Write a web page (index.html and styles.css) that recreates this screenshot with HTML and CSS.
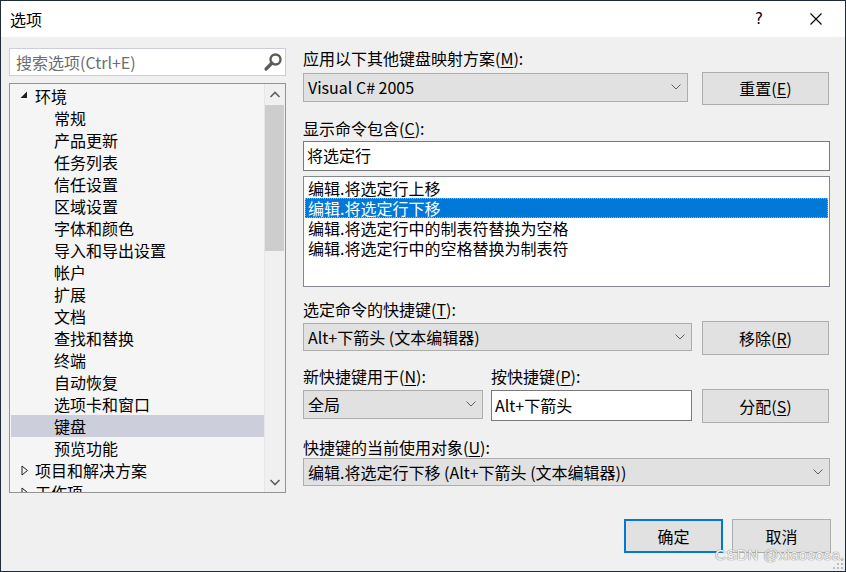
FILE: index.html
```html
<!DOCTYPE html>
<html lang="zh-CN">
<head>
<meta charset="utf-8">
<title>选项</title>
<link rel="stylesheet" href="styles.css">
</head>
<body>
<div class="window">
  <div class="titlebar">
    <span class="title">选项</span>
    <span class="help">?</span>
    <svg class="close" width="14" height="14" viewBox="0 0 14 14"><path d="M1.5 1.5 L12.5 12.5 M12.5 1.5 L1.5 12.5" stroke="#000" stroke-width="1.1" fill="none"/></svg>
  </div>
  <div class="client">
    <div class="main">
      <div class="left">
        <div class="search">
          <span class="placeholder">搜索选项(Ctrl+E)</span>
          <svg class="search-icon" width="20" height="20" viewBox="0 0 20 20"><circle cx="12.5" cy="7.5" r="5" stroke="#5c5c5c" stroke-width="2.4" fill="none"/><path d="M9 11 L3 17" stroke="#5c5c5c" stroke-width="3.2" stroke-linecap="round"/></svg>
        </div>
        <div class="tree">
          <div class="tree-list">
            <div class="node"><svg class="exp" width="8" height="8" viewBox="0 0 8 8"><polygon points="7,0.5 7,7 0.5,7" fill="#1e1e1e"/></svg>环境</div>
            <div class="node child">常规</div>
            <div class="node child">产品更新</div>
            <div class="node child">任务列表</div>
            <div class="node child">信任设置</div>
            <div class="node child">区域设置</div>
            <div class="node child">字体和颜色</div>
            <div class="node child">导入和导出设置</div>
            <div class="node child">帐户</div>
            <div class="node child">扩展</div>
            <div class="node child">文档</div>
            <div class="node child">查找和替换</div>
            <div class="node child">终端</div>
            <div class="node child">自动恢复</div>
            <div class="node child">选项卡和窗口</div>
            <div class="node child selected">键盘</div>
            <div class="node child">预览功能</div>
            <div class="node"><svg class="col" width="8" height="11" viewBox="0 0 8 11"><polygon points="1,1 6.5,5.5 1,10" fill="none" stroke="#1e1e1e" stroke-width="1"/></svg>项目和解决方案</div>
            <div class="node"><svg class="col" width="8" height="11" viewBox="0 0 8 11"><polygon points="1,1 6.5,5.5 1,10" fill="none" stroke="#1e1e1e" stroke-width="1"/></svg>工作项</div>
          </div>
          <div class="vscroll">
            <svg class="sarrow" width="20" height="20" viewBox="0 0 20 20"><path d="M5.5 12 L10 7.5 L14.5 12" stroke="#606060" stroke-width="1.6" fill="none"/></svg>
            <div class="thumb"></div>
            <div class="track"></div>
            <svg class="sarrow" width="20" height="20" viewBox="0 0 20 20"><path d="M5.5 8 L10 12.5 L14.5 8" stroke="#606060" stroke-width="1.6" fill="none"/></svg>
          </div>
        </div>
      </div>
      <div class="right">
        <div class="label l1">应用以下其他键盘映射方案(<u>M</u>):</div>
        <div class="row r1">
          <div class="combo c1"><span>Visual C# 2005</span><svg class="chev" width="10" height="6" viewBox="0 0 10 6"><path d="M0.5 0.5 L5 5 L9.5 0.5" stroke="#606060" stroke-width="1" fill="none"/></svg></div>
          <div class="button">重置(<u>E</u>)</div>
        </div>
        <div class="label l2">显示命令包含(<u>C</u>):</div>
        <div class="textbox t1">将选定行</div>
        <div class="listbox">
          <div class="item">编辑.将选定行上移</div>
          <div class="item sel">编辑.将选定行下移</div>
          <div class="item">编辑.将选定行中的制表符替换为空格</div>
          <div class="item">编辑.将选定行中的空格替换为制表符</div>
        </div>
        <div class="label l3">选定命令的快捷键(<u>T</u>):</div>
        <div class="row r3">
          <div class="combo c3"><span>Alt+下箭头 (文本编辑器)</span><svg class="chev" width="10" height="6" viewBox="0 0 10 6"><path d="M0.5 0.5 L5 5 L9.5 0.5" stroke="#606060" stroke-width="1" fill="none"/></svg></div>
          <div class="button">移除(<u>R</u>)</div>
        </div>
        <div class="row l4">
          <div class="label w4a">新快捷键用于(<u>N</u>):</div>
          <div class="label">按快捷键(<u>P</u>):</div>
        </div>
        <div class="row r4">
          <div class="combo c4"><span>全局</span><svg class="chev" width="10" height="6" viewBox="0 0 10 6"><path d="M0.5 0.5 L5 5 L9.5 0.5" stroke="#606060" stroke-width="1" fill="none"/></svg></div>
          <div class="textbox t4">Alt+下箭头</div>
          <div class="button">分配(<u>S</u>)</div>
        </div>
        <div class="label l5">快捷键的当前使用对象(<u>U</u>):</div>
        <div class="combo c5"><span>编辑.将选定行下移 (Alt+下箭头 (文本编辑器))</span><svg class="chev" width="10" height="6" viewBox="0 0 10 6"><path d="M0.5 0.5 L5 5 L9.5 0.5" stroke="#606060" stroke-width="1" fill="none"/></svg></div>
      </div>
    </div>
    <div class="footer">
      <div class="button ok">确定</div>
      <div class="button cancel">取消</div>
    </div>
  </div>
  <div class="watermark">CSDN @xiaososa.</div>
  <svg class="grip" width="12" height="12" viewBox="0 0 12 12"><g fill="#bdbdbd"><rect x="9" y="1" width="2" height="2"/><rect x="5" y="5" width="2" height="2"/><rect x="9" y="5" width="2" height="2"/><rect x="1" y="9" width="2" height="2"/><rect x="5" y="9" width="2" height="2"/><rect x="9" y="9" width="2" height="2"/></g></svg>
</div>
</body>
</html>
```
FILE: styles.css
```css
* { box-sizing: border-box; }
html, body { margin: 0; padding: 0; background: #1f2b38; }
body {
  font-family: "Noto Sans CJK SC", "Noto Sans", sans-serif;
  font-size: 16px;
  color: #000;
}
u { text-decoration: underline; text-underline-offset: 2px; text-decoration-thickness: 1px; }

.window {
  position: relative;
  width: 846px;
  height: 572px;
  border: 1px solid #1f2b38;
  background: #f0f0f0;
  overflow: hidden;
}

.titlebar {
  height: 36px;
  background: #fff;
  display: flex;
  align-items: center;
  padding-left: 9px;
}
.title { font-size: 16px; line-height: 20px; }
.help { margin-left: auto; line-height: 20px; margin-right: 46px; font-family: "DejaVu Sans", sans-serif; font-size: 15px; }
.close { margin-right: 22px; }

.client { height: 534px; display: flex; flex-direction: column; }
.main { display: flex; padding-left: 8px; }

.left { width: 277px; padding-top: 11px; }
.search {
  height: 28px;
  border: 1px solid #ccccde;
  background: #fff;
  display: flex;
  align-items: center;
  padding-left: 6px;
  padding-bottom: 1px;
}
.placeholder { color: #6d6d6d; line-height: 20px; }
.search-icon { margin-left: auto; margin-right: 2px; }

.tree {
  margin-top: 7px;
  height: 410px;
  border: 1px solid #939393;
  background: #f5f5f5;
  display: flex;
  overflow: hidden;
}
.tree-list { flex: 1; padding-top: 1px; padding-left: 1px; }
.node {
  height: 22px;
  line-height: 22px;
  padding-left: 24px;
  white-space: nowrap;
  display: flex;
  align-items: center;
}
.node.child { padding-left: 43px; }
.node.selected { background: #cccedb; }
.exp { margin-left: -15px; margin-right: 7px; margin-top: -2px; }
.col { margin-left: -14px; margin-right: 6px; }

.vscroll {
  width: 21px;
  border-left: 1px solid #e6e6e6;
  background: #f0f0f0;
  display: flex;
  flex-direction: column;
}
.sarrow { display: block; flex: none; margin-top: 1px; }
.thumb { height: 146px; background: #cdcdcd; margin-right: 1px; flex: none; }
.track { flex: 1; }

.right { margin-left: 17px; width: 527px; padding-top: 11px; }
.label { height: 20px; line-height: 20px; white-space: nowrap; }
.row { display: flex; align-items: center; }

.combo {
  background: #e1e1e1;
  border: 1px solid #adadad;
  display: flex;
  align-items: center;
  padding-left: 4px;
  padding-right: 6px;
  padding-bottom: 1px;
  line-height: 20px;
  white-space: nowrap;
}
.combo .chev { margin-left: auto; }
.button {
  width: 127px;
  background: #e1e1e1;
  border: 1px solid #adadad;
  display: flex;
  align-items: center;
  justify-content: center;
  line-height: 20px;
  padding-bottom: 1px;
}
.textbox {
  background: #fff;
  border: 1px solid #7a7a7a;
  padding-left: 3px;
  padding-bottom: 2px;
  display: flex;
  align-items: center;
  line-height: 20px;
}

.r1 { margin-top: 4px; height: 33px; gap: 14px; }
.r1 .button { height: 33px; }
.c1 { width: 385px; height: 29px; margin-top: 1px; align-self: flex-start; }

.l2 { margin-top: 13px; }
.t1 { margin-top: 3px; height: 30px; width: 527px; }

.listbox {
  margin-top: 5px;
  height: 111px;
  border: 1px solid #828790;
  background: #fff;
  padding: 1px;
}
.item { height: 20px; line-height: 20px; padding-left: 3px; white-space: nowrap; }
.item.sel { background: #0078d7; color: #fff; outline: 1px dotted #f0a030; outline-offset: -1px; }

.l3 { margin-top: 12px; }
.r3 { margin-top: 2px; height: 34px; gap: 10px; }
.r3 .button { height: 34px; }
.c3 { width: 389px; height: 28px; align-self: flex-start; margin-top: 2px; }

.l4 { margin-top: 11px; height: 20px; }
.w4a { width: 188px; }

.r4 { margin-top: 3px; height: 34px; }
.r4 .button { height: 34px; margin-left: 10px; }
.c4 { width: 180px; height: 29px; align-self: flex-start; margin-top: 1px; }
.t4 { width: 201px; height: 31px; margin-left: 8px; align-self: flex-start; margin-top: 1px; }

.l5 { margin-top: 14px; }
.c5 { margin-top: 1px; width: 527px; height: 28px; }

.footer {
  margin-top: auto;
  margin-bottom: 18px;
  display: flex;
  justify-content: flex-end;
  gap: 9px;
  padding-right: 14px;
}
.footer .button { width: 99px; height: 34px; }
.button.ok { border: 2px solid #0078d7; }

.watermark {
  position: absolute;
  left: 714px;
  top: 545px;
  font-family: "Liberation Sans", sans-serif;
  font-size: 15px;
  color: #f2f2f2;
  text-shadow: 0 0 1px #808080, 0 0 1px #808080;
  letter-spacing: 0.3px;
}
.grip { position: absolute; right: 1px; bottom: 1px; }
```
